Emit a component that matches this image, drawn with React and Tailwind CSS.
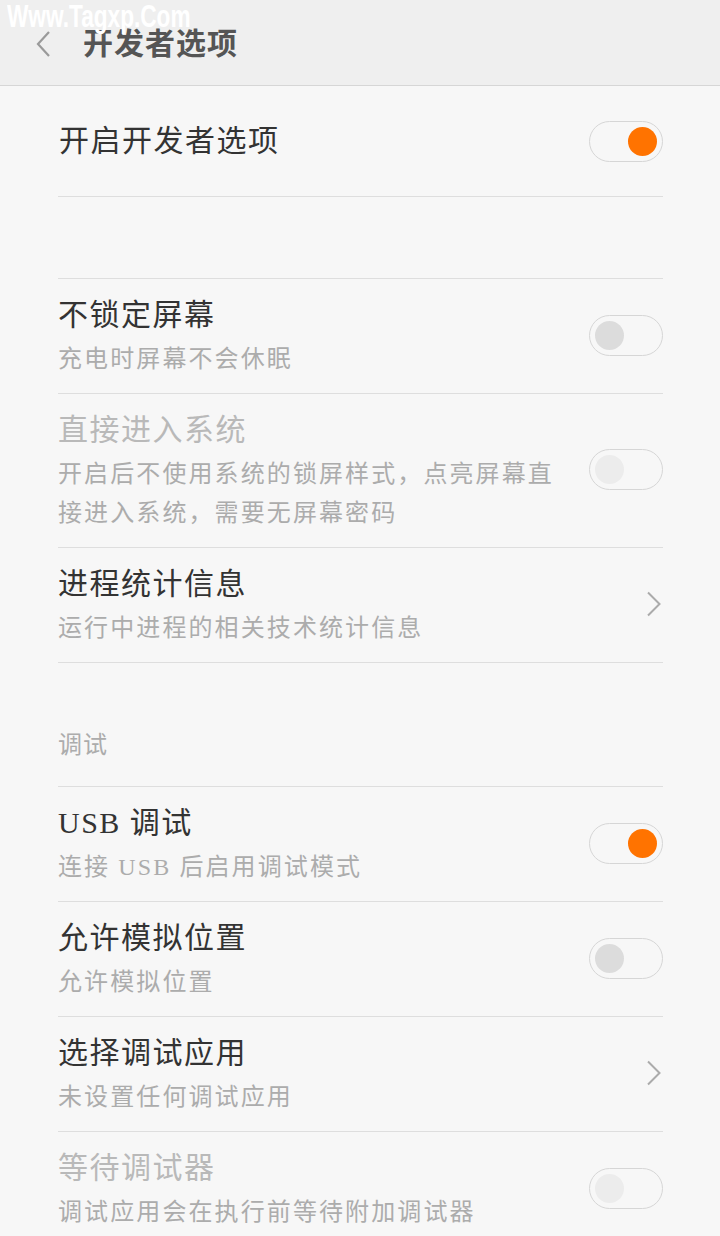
import React from "react";

const FONT = { fontFamily: '"Liberation Serif", "Noto Sans CJK SC", serif' };

function Toggle({ on, disabled }) {
  return (
    <div
      className={`w-[74px] h-[41px] shrink-0 rounded-full border border-[#d6d6d6] flex items-center px-[5px] ${
        on ? "justify-end" : "justify-start"
      }`}
    >
      <div
        className={`w-[29px] h-[29px] rounded-full ${
          on ? "bg-[#ff7300]" : disabled ? "bg-[#ececec]" : "bg-[#dcdcdc]"
        }`}
      />
    </div>
  );
}

function Chevron() {
  return (
    <svg width="16" height="26" viewBox="0 0 16 26" className="shrink-0 mr-[1px]">
      <path d="M2 1.5 L13.5 13 L2 24.5" fill="none" stroke="#ababab" strokeWidth="2" />
    </svg>
  );
}

function Row({ title, sub, right, disabled }) {
  return (
    <div className="flex items-center border-b border-[#dedede] pt-[16px] pb-[14px]">
      <div className="flex-1 min-w-0">
        <div
          className={`text-[30px] leading-[40px] tracking-[1.5px] ${
            disabled ? "text-[#b9b9b9]" : "text-[#333333]"
          }`}
        >
          {title}
        </div>
        <div className="mt-[5px] text-[24px] leading-[39px] tracking-[2.1px] text-[#acacac]">
          {sub}
        </div>
      </div>
      <div className="mb-[4px] shrink-0 flex items-center">{right}</div>
    </div>
  );
}

export default function App() {
  return (
    <div className="w-[720px] h-[1236px] overflow-hidden bg-[#f7f7f7] relative" style={FONT}>
      <div className="h-[86px] bg-[#efefef] border-b border-[#d6d6d6] flex items-center pt-[3px]">
        <svg width="18" height="28" viewBox="0 0 18 28" className="ml-[34px]">
          <path d="M15 2 L4 14 L15 26" fill="none" stroke="#9a9a9a" strokeWidth="2.2" />
        </svg>
        <div className="ml-[31px] text-[30px] leading-[40px] font-bold text-[#555555] tracking-[1px]">
          开发者选项
        </div>
      </div>
      <div
        className="absolute left-[7px] top-[0px] text-[31px] leading-[34px] font-bold text-white origin-left scale-x-[0.73]"
        style={{ fontFamily: '"Liberation Sans", sans-serif' }}
      >
        Www.Tagxp.Com
      </div>

      <div className="pl-[58px] pr-[57px]">
        <div className="h-[111px] flex items-center border-b border-[#dedede]">
          <div className="flex-1 text-[30px] leading-[40px] tracking-[1.5px] text-[#333333] pl-[1px]">
            开启开发者选项
          </div>
          <Toggle on />
        </div>
        <div className="h-[82px] border-b border-[#dedede]" />

        <Row title="不锁定屏幕" sub="充电时屏幕不会休眠" right={<Toggle />} />
        <Row
          title="直接进入系统"
          disabled
          sub={
            <>
              开启后不使用系统的锁屏样式，点亮屏幕直
              <br />
              接进入系统，需要无屏幕密码
            </>
          }
          right={<Toggle disabled />}
        />
        <Row title="进程统计信息" sub="运行中进程的相关技术统计信息" right={<Chevron />} />

        <div className="h-[124px] border-b border-[#dedede] pt-[67px]">
          <div className="text-[24px] leading-[30px] text-[#acacac] tracking-[1px]">调试</div>
        </div>

        <Row title="USB 调试" sub="连接 USB 后启用调试模式" right={<Toggle on />} />
        <Row title="允许模拟位置" sub="允许模拟位置" right={<Toggle />} />
        <Row title="选择调试应用" sub="未设置任何调试应用" right={<Chevron />} />
        <Row title="等待调试器" disabled sub="调试应用会在执行前等待附加调试器" right={<Toggle disabled />} />
      </div>
    </div>
  );
}
